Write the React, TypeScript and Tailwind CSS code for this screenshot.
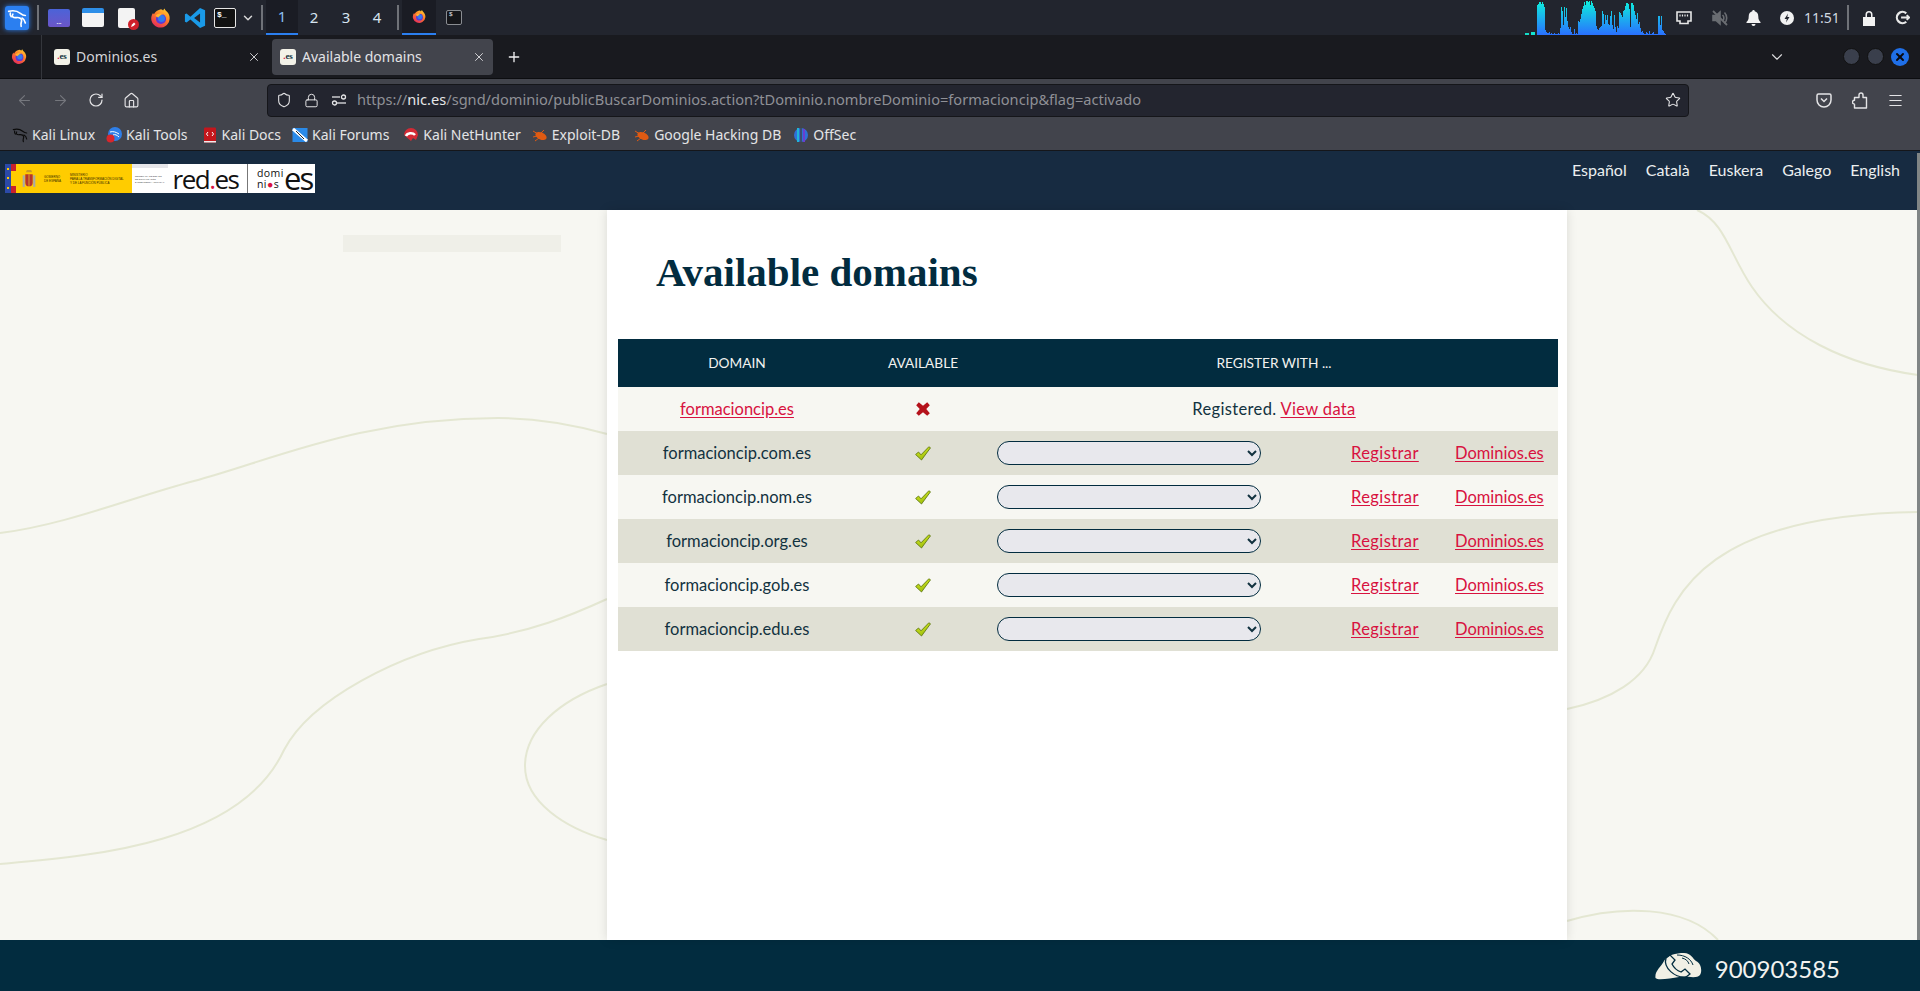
import React from "react";
import { ArrowLeft, ArrowRight, RotateCw, Home, Shield, Lock, Star, Menu, X, Plus, ChevronDown } from "lucide-react";

const ui = "font-['Noto_Sans',sans-serif]";
const web = "font-['Lato',sans-serif]";

const Firefox = ({ size = 22 }: { size?: number }) => (
  <svg width={size} height={size} viewBox="0 0 24 24" className="shrink-0">
    <defs>
      <linearGradient id="ffo" x1="0.8" y1="0" x2="0.2" y2="1">
        <stop offset="0" stopColor="#ffd02e" />
        <stop offset="0.45" stopColor="#ff7a2a" />
        <stop offset="1" stopColor="#e3255f" />
      </linearGradient>
    </defs>
    <path d="M12 2.500c1 .2 1.800.7 2.300 1.400.3-.7.800-1.500 1.700-2.200.2 1.500 1.200 2 2.800 3.800 2 2.300 3 5 2.500 8A10 10 0 1 1 3.300 6.500c.3.800.6 1.200 1 1.500C5.500 5.300 8.600 3 12 2.500Z" fill="url(#ffo)" />
    <circle cx="12" cy="13" r="5.500" fill="#5b3bd6" />
    <circle cx="12.500" cy="12.500" r="3.800" fill="#2f7bf0" />
    <path d="M6 9.500c2-2.500 6-3 8.500-1.500-2 .1-3 .8-3.500 1.800-1 .2-1.500.8-1.800 1.700C8 11.200 7 10.500 6 9.500Z" fill="#ffb52e" />
  </svg>
);

const Dragon = ({ color = "#fff", size = 20, width = 2 }: { color?: string; size?: number; width?: number }) => (
  <svg width={size} height={size} viewBox="0 0 24 24" fill="none" stroke={color} strokeWidth={width} strokeLinecap="round" strokeLinejoin="round">
    <path d="M2 4c6-1.500 11 0 14 2.500 2.500 2 4 2.500 6 2.500" />
    <path d="M7 7.500C5 10 7.500 12 11 11.500c4-.5 7 1 6.500 4-.3 2-1.500 3.500-.5 6.500" />
    <path d="M18 12c2 1 3.500 3 4 6" />
    <path d="M4 6c-.5 2 0 3.500 1 4.500" />
  </svg>
);

const Favicon = () => (
  <span className="flex h-4 w-4 shrink-0 items-center justify-center rounded-[3px] bg-[#f3f2e8] font-['Liberation_Serif',serif] text-[9px] font-bold leading-none text-[#12323f]">
    <span className="text-[#d8123f]">.</span>es
  </span>
);

const Sep = () => <span className="block h-[25px] w-[2px] shrink-0 bg-[#6f7278]" />;

const barData = [
  30, 31, 33, 33, 31, 33, 31, 28, 5, 3, 2, 2, 3, 1, 2, 1, 1, 2, 1, 1, 1, 2, 1, 7, 28, 24, 10, 28, 18, 27, 14, 8, 6, 8, 3, 1, 1, 6, 1, 2, 1, 14, 13, 16, 21, 26, 29, 33, 30, 34, 34, 33, 34, 30, 34, 32, 29, 27, 24, 9, 6, 5, 7, 8, 9, 24, 21, 11, 20, 15, 20, 11, 10, 19, 24, 10, 6, 20, 8, 3, 9, 7, 23, 22, 20, 18, 24, 25, 29, 32, 32, 31, 26, 8, 32, 32, 30, 24, 20, 16, 22, 11, 13, 7, 3, 4, 2, 1, 1, 3, 2, 1, 4, 1, 1, 2, 3, 1, 1, 1, 1, 19, 19, 10, 19, 5, 4, 2, 1,
];

const CpuGraph = () => (
  <svg width="142" height="34" viewBox="0 0 142 34" className="shrink-0">
    <defs>
      <linearGradient id="cpu" gradientUnits="userSpaceOnUse" x1="0" y1="0" x2="0" y2="34">
        <stop offset="0" stopColor="#0df0dc" />
        <stop offset="1" stopColor="#2a70ff" />
      </linearGradient>
    </defs>
    <rect x="0" y="32" width="4" height="2" fill="#14dcc8" />
    <rect x="6" y="31" width="4" height="3" fill="#12e4d0" />
    {barData.map((h, i) => (
      <rect key={i} x={12 + i} y={34 - h} width="1" height={h} fill="url(#cpu)" />
    ))}
  </svg>
);

const TopPanel = () => (
  <div className={`flex h-[35px] shrink-0 items-center bg-[#22252e] text-[#d6e4f0] ${ui}`}>
    <span className="ml-[5px] flex h-6 w-6 items-center justify-center rounded-[3px] bg-[#2b7ff0] shadow-[0_0_5px_#2b7ff0]">
      <Dragon />
    </span>
    <span className="ml-[8px]"><Sep /></span>
    <span className="ml-[9px] flex h-[18px] w-[22px] items-end justify-center rounded-[2px] bg-gradient-to-b from-[#4a63d8] to-[#6a55c8] pb-[2px] text-[6px] font-bold leading-none text-white">...</span>
    <span className="ml-[12px] h-[19px] w-[22px] rounded-[2px] bg-gradient-to-b from-[#2e8fe8] from-[25%] to-[#f4f4f4] to-[25%]" />
    <span className="relative ml-[14px] h-[20px] w-[17px] rounded-[2px] bg-[#f3f3f3]">
      <svg width="11" height="11" viewBox="0 0 11 11" className="absolute -bottom-[2px] -right-[4px]">
        <circle cx="5.500" cy="5.500" r="5.500" fill="#d0202a" />
        <path d="M3 8l1-2.500 2-2 1.500 1.500-2 2Z" fill="#fff" />
      </svg>
    </span>
    <span className="ml-[15px]"><Firefox /></span>
    <svg width="22" height="22" viewBox="0 0 24 24" className="ml-[12px] shrink-0">
      <path d="M17.500 1 23 3.500v17L17.500 23 7 13.500 2.800 17 1 16V8l1.800-1L7 10.500Zm0 6L11 12l6.500 5Z" fill="#1a9ae8" />
    </svg>
    <span className="ml-[8px] flex h-[20px] w-[22px] items-start rounded-[2px] border border-[#e6e6e6] bg-[#111] pl-[2px] font-['Liberation_Mono',monospace] text-[8px] font-bold leading-[11px] text-white">$_</span>
    <ChevronDown size={14} strokeWidth={2.500} className="ml-[5px] text-[#d8d8d8]" />
    <span className="ml-[6px]"><Sep /></span>
    <div className="ml-[3px] flex h-[35px] text-[15px]">
      <span className="flex h-[35px] w-[32px] items-center justify-center border-b-[2px] border-[#2b7ff0] bg-[#1a1c24] text-[#8cc0f0]">1</span>
      <span className="flex w-[32px] items-center justify-center">2</span>
      <span className="flex w-[32px] items-center justify-center">3</span>
      <span className="flex w-[30px] items-center justify-center">4</span>
    </div>
    <span className="ml-[5px]"><Sep /></span>
    <span className="ml-[3px] flex h-[35px] w-[34px] items-center justify-center border-b-[2px] border-[#2b7ff0] bg-[#1a1c24]"><Firefox size={15} /></span>
    <span className="ml-[10px] flex h-[15px] w-[16px] items-start rounded-[2px] border border-[#8a8d92] bg-[#15161a] pl-[2px] font-['Liberation_Mono',monospace] text-[6px] leading-[7px] text-white">$</span>
    <div className="flex-1" />
    <span className="mr-[9px]"><CpuGraph /></span>
    <svg width="16" height="14" viewBox="0 0 16 14" className="mr-[19px] shrink-0" fill="none" stroke="#e8e8e8" strokeWidth="1.600">
      <path d="M1 1h14v9h-3v2.500H4V10H1Z" />
      <path d="M4 3.500v2M6.500 3.500v2M9 3.500v2M11.500 3.500v2" strokeWidth="1.200" />
    </svg>
    <svg width="18" height="18" viewBox="0 0 18 18" className="mr-[17px] shrink-0" fill="none" stroke="#6a6d72" strokeWidth="1.600">
      <path d="M2 6.500h3L9 3v12l-4-3.500H2Z" fill="#6a6d72" />
      <path d="M11.500 6a4 4 0 0 1 0 6M13.500 3.500a8 8 0 0 1 0 11" />
      <path d="M2 2l14 14" strokeWidth="1.800" />
    </svg>
    <svg width="15" height="16" viewBox="0 0 15 16" className="mr-[19px] shrink-0" fill="#f2f2f2">
      <path d="M7.500 0a1.200 1.200 0 0 1 1.200 1.300C11 1.900 12.300 3.800 12.300 6.500c0 3 .8 4 2.200 5.500v1H.5v-1C2 10.500 2.700 9.500 2.700 6.500c0-2.700 1.300-4.600 3.600-5.200A1.200 1.200 0 0 1 7.500 0ZM5.500 14h4a2 2 0 0 1-4 0Z" />
    </svg>
    <svg width="14" height="14" viewBox="0 0 14 14" className="mr-[10px] shrink-0">
      <circle cx="7" cy="7" r="7" fill="#f2f2f2" />
      <path d="M8 2.500 4.500 8h2.300L6 11.500 9.500 6H7.300Z" fill="#22252e" />
    </svg>
    <span className="w-[30px] text-[14px] leading-none text-[#cfd8e0]">11:51</span>
    <span className="ml-[13px]"><Sep /></span>
    <svg width="14" height="16" viewBox="0 0 14 16" className="ml-[13px] shrink-0" fill="#f2f2f2">
      <path d="M1 7h12v9H1ZM3.500 7V4.500a3.500 3.500 0 0 1 7 0V7H9V4.500a2 2 0 0 0-4 0V7Z" />
    </svg>
    <svg width="15" height="15" viewBox="0 0 16 16" className="ml-[19px] mr-[10px] shrink-0" fill="none" stroke="#e8e8e8" strokeWidth="2.400">
      <path d="M12 3.500a6 6 0 1 0 0 9" />
      <path d="M6.500 8H15M12.500 5.500 15 8l-2.500 2.500" strokeWidth="2" />
    </svg>
  </div>
);

const TabClose = () => <X size={14} strokeWidth={1.500} className="shrink-0 text-[#e4e4e6]" />;

const TabBar = () => (
  <div className={`flex h-[44px] shrink-0 items-center border-b border-[#0c0d10] bg-[#191a1f] text-[14px] text-[#d4d5d8] ${ui}`}>
    <span className="ml-[11px]"><Firefox size={17} /></span>
    <span className="ml-[13px] h-[44px] w-px bg-[#34363c]" />
    <div className="ml-[5px] flex h-[36px] w-[225px] items-center rounded-[4px] pl-[7px] pr-[11px]">
      <Favicon />
      <span className="ml-[6px] flex-1">Dominios.es</span>
      <TabClose />
    </div>
    <div className="flex h-[36px] w-[221px] items-center rounded-[4px] bg-[#42444c] pl-[8px] pr-[7px] text-[#e2e3e6]">
      <Favicon />
      <span className="ml-[6px] flex-1">Available domains</span>
      <TabClose />
    </div>
    <Plus size={16} className="ml-[13px] text-[#f0f0f2]" />
    <div className="flex-1" />
    <ChevronDown size={18} strokeWidth={1.500} className="text-[#dcdcde]" />
    <span className="ml-[57px] h-[17px] w-[17px] rounded-full border border-[#111] bg-[#3a3f4c]" />
    <span className="ml-[7px] h-[17px] w-[17px] rounded-full border border-[#111] bg-[#3a3f4c]" />
    <span className="ml-[7px] mr-[11px] flex h-[18px] w-[18px] items-center justify-center rounded-full bg-[#1f6fe8]">
      <X size={12} strokeWidth={4} className="text-[#0a0a10]" />
    </span>
  </div>
);

const Toolbar = () => (
  <div className={`flex h-[41px] shrink-0 items-center bg-[#42444c] pt-[1px] text-[#e4e4e6] ${ui}`}>
    <ArrowLeft size={17} strokeWidth={1.500} className="ml-[16px] text-[#75777d]" />
    <ArrowRight size={17} strokeWidth={1.500} className="ml-[19px] text-[#75777d]" />
    <RotateCw size={16} strokeWidth={1.800} className="ml-[19px]" />
    <Home size={17} strokeWidth={1.600} className="ml-[19px]" />
    <div className="ml-[127px] flex h-[33px] w-[1422px] items-center rounded-[4px] border border-[#15161a] bg-[#23252f] pl-[8px] pr-[7px] text-[14.600px]">
      <Shield size={16} strokeWidth={1.600} className="text-[#e4e4e6]" />
      <Lock size={15} strokeWidth={1.600} className="ml-[12px] text-[#e4e4e6]" />
      <svg width="16" height="12" viewBox="0 0 16 12" className="ml-[12px] shrink-0" fill="none" stroke="#e4e4e6" strokeWidth="1.300">
        <path d="M1 3h8" />
        <circle cx="12.500" cy="3" r="2" />
        <circle cx="3.500" cy="9" r="2" />
        <path d="M6 9h9" />
      </svg>
      <span className="ml-[10px] flex-1 truncate text-[#8f9096]">
        https://<span className="text-[#e6e6e8]">nic.es</span>/sgnd/dominio/publicBuscarDominios.action?tDominio.nombreDominio=formacioncip&amp;flag=activado
      </span>
      <Star size={16} strokeWidth={1.600} />
    </div>
    <svg width="16" height="15" viewBox="0 0 16 15" className="ml-[127px] shrink-0" fill="none" stroke="#e4e4e6" strokeWidth="1.500">
      <path d="M2.500 1h11A1.500 1.500 0 0 1 15 2.500V7a7 7 0 0 1-14 0V2.500A1.500 1.500 0 0 1 2.500 1Z" />
      <path d="m5 5.500 3 3 3-3" />
    </svg>
    <svg width="16" height="17" viewBox="0 0 16 17" className="ml-[20px] shrink-0" fill="none" stroke="#e4e4e6" strokeWidth="1.400" strokeLinejoin="round">
      <path d="M2.500 16v-3.800a2 2 0 0 1 0-4V5.500H7V3a2 2 0 0 1 4 0v2.500h3.500V16Z" />
    </svg>
    <Menu size={17} strokeWidth={1.600} className="ml-[19px]" />
  </div>
);

const Bug = () => (
  <svg width="16" height="16" viewBox="0 0 16 16">
    <ellipse cx="9" cy="9" rx="6" ry="3.500" transform="rotate(25 9 9)" fill="#e05a12" />
    <path d="M1 4l5 3M1 10l4-1M3 14l4-3M12 3 9 6" stroke="#e05a12" />
  </svg>
);

const bookmarks: [string, number, React.ReactNode][] = [
  ["Kali Linux", 12, <Dragon color="#0b0b0b" size={16} width={1.800} />],
  ["Kali Tools", 11, (
    <svg width="16" height="16" viewBox="0 0 16 16"><circle cx="9" cy="7" r="7" fill="#2f7fe8" /><path d="M4 5c3-1 6 0 9 2M7 8c2-1 4 0 6 2" stroke="#fff" fill="none" /><circle cx="4.500" cy="11.500" r="4" fill="#d8262c" /></svg>
  )],
  ["Kali Docs", 14, (
    <svg width="16" height="16" viewBox="0 0 16 16"><rect x="2" y="0.500" width="12" height="15" rx="1" fill="#c4161c" /><path d="M6 5 4.500 7 6 9M10 5l1.500 2L10 9" stroke="#fff" fill="none" /><rect x="2" y="14" width="12" height="1.500" fill="#eee" /></svg>
  )],
  ["Kali Forums", 11, (
    <svg width="16" height="16" viewBox="0 0 16 16"><rect x="0.500" y="1" width="15" height="14" fill="#2a8ae8" /><path d="M1 2 15 14" stroke="#fff" strokeWidth="3" /><path d="M4 4l8 8" stroke="#222" /></svg>
  )],
  ["Kali NetHunter", 14, (
    <svg width="16" height="16" viewBox="0 0 16 16"><path d="M1 8a7 7 0 0 1 14 0l-2 5-3-2-2 3Z" fill="#d32a35" /><path d="M3 9a5 4 0 0 1 9-1" stroke="#fff" strokeWidth="2.500" fill="none" /></svg>
  )],
  ["Exploit-DB", 11, <Bug />],
  ["Google Hacking DB", 14, <Bug />],
  ["OffSec", 12, (
    <svg width="16" height="16" viewBox="0 0 16 16"><circle cx="8" cy="8" r="7" fill="#2f6fd8" /><path d="M8 0v16" stroke="#42444c" strokeWidth="1.500" /><path d="M5 1v14" stroke="#1fb5d8" strokeWidth="2" /><path d="M11 2v13" stroke="#6a3fd0" strokeWidth="2" /></svg>
  )],
];

const Bookmarks = () => (
  <div className={`flex h-[31px] shrink-0 items-center border-b border-[#15161a] bg-[#42444c] pb-[1px] pl-[12px] text-[14px] text-[#e4e4e6] ${ui}`}>
    {bookmarks.map(([label, gap, icon], i) => (
      <span key={label} className="flex items-center gap-[4px]" style={{ marginLeft: i === 0 ? 0 : gap }}>
        <span className="h-4 w-4 shrink-0">{icon}</span>
        {label}
      </span>
    ))}
  </div>
);

const Logo = () => (
  <div className="ml-[5px] flex h-[29px] w-[310px] shrink-0 items-stretch bg-white">
    <div className="flex w-[6px] flex-col items-center justify-around bg-[#2c4aa8]">
      <span className="h-[2px] w-[2px] bg-[#ffcc00]" />
      <span className="h-[2px] w-[2px] bg-[#ffcc00]" />
      <span className="h-[2px] w-[2px] bg-[#ffcc00]" />
    </div>
    <div className="flex w-[5px] flex-col">
      <span className="h-[7px] bg-[#c8202c]" />
      <span className="flex-1 bg-[#ffcc00]" />
      <span className="h-[7px] bg-[#c8202c]" />
    </div>
    <div className="flex w-[116px] items-center bg-[#ffcc00] pl-[5px] font-['Liberation_Sans',sans-serif] text-[3px] leading-[4px] text-[#3a2a00]">
      <svg width="16" height="20" viewBox="0 0 14 19" className="shrink-0">
        <rect x="1" y="6" width="2" height="11" fill="#a8a8a8" />
        <rect x="11" y="6" width="2" height="11" fill="#a8a8a8" />
        <path d="M3.500 5h7v8a3.500 3.500 0 0 1-7 0Z" fill="#b8342a" />
        <path d="M4 3h6L9 1H5Z" fill="#c8992a" />
        <path d="M7 5v11" stroke="#d8a030" />
      </svg>
      <span className="ml-[7px] w-[18px] whitespace-nowrap">GOBIERNO<br />DE ESPAÑA</span>
      <span className="ml-[8px] whitespace-nowrap">MINISTERIO<br />PARA LA TRANSFORMACIÓN DIGITAL<br />Y DE LA FUNCIÓN PÚBLICA</span>
    </div>
    <div className="flex w-[36px] flex-col bg-white">
      <span className="h-[4px] bg-[#e6e6ea]" />
      <span className="mt-[7px] whitespace-nowrap pl-[3px] font-['Liberation_Sans',sans-serif] text-[2.200px] leading-[3px] text-[#444]">SECRETARÍA DE ESTADO<br />DE DIGITALIZACIÓN<br />E INTELIGENCIA ARTIFICIAL</span>
    </div>
    <div className="flex w-[80px] items-center justify-center border-r-[1px] border-[#777] pr-[4px] font-['Open_Sans',sans-serif] text-[26px] font-medium leading-none tracking-[-1.500px] text-[#111]">
      red<span className="text-[#d8123f]">.</span>es
    </div>
    <div className="flex flex-1 items-center pl-[9px] font-['Open_Sans',sans-serif] text-[#111]">
      <span className="w-[27px] text-[10.500px] leading-[11px] tracking-[0.400px]">domi<br />ni<span className="text-[#d8123f]">●</span>s</span>
      <span className="text-[31px] leading-none tracking-[-2px]">es</span>
    </div>
  </div>
);

const SiteHeader = () => (
  <div className={`flex h-[59px] shrink-0 items-start bg-[#172b41] pt-[13px] text-[16px] text-[#eceff0] ${web}`}>
    <Logo />
    <nav className="ml-auto mr-[20px] flex gap-[19px] leading-[12px]">
      <span>Español</span>
      <span>Català</span>
      <span>Euskera</span>
      <span>Galego</span>
      <span>English</span>
    </nav>
  </div>
);

const Cross = () => (
  <svg width="14" height="14" viewBox="0 0 15 15" className="mx-auto">
    <path d="M3 .3 7.500 4 12 .3 14.800 3.500 11 7.500 14.800 12 12 14.800 7.500 11 3 14.800.2 12 4 7.500.2 3.500Z" fill="#b5121b" />
  </svg>
);

const Tick = () => (
  <svg width="16" height="15" viewBox="0 0 16 15" className="mx-auto">
    <defs>
      <linearGradient id="tick" x1="0" y1="0" x2="0.400" y2="1">
        <stop offset="0" stopColor="#d8ea20" />
        <stop offset="1" stopColor="#a0c010" />
      </linearGradient>
    </defs>
    <path d="M.6 8.500 3.500 6 6 8.800 13.800.8 15.500 1.800 6.500 14Z" fill="url(#tick)" stroke="#55700a" strokeWidth="0.800" />
  </svg>
);

const A = ({ children, className = "" }: { children: React.ReactNode; className?: string }) => (
  <a className={`text-[#d8123f] underline underline-offset-[2px] ${className}`}>{children}</a>
);

const domains = ["formacioncip.com.es", "formacioncip.nom.es", "formacioncip.org.es", "formacioncip.gob.es", "formacioncip.edu.es"];

const DomainTable = () => (
  <table className={`ml-[11px] w-[940px] table-fixed border-collapse text-[16.500px] text-[#12323f] ${web}`}>
    <colgroup>
      <col className="w-[238px]" />
      <col className="w-[134px]" />
      <col className="w-[346px]" />
      <col className="w-[97px]" />
      <col className="w-[125px]" />
    </colgroup>
    <thead>
      <tr className="h-[48px] bg-[#022c3f] text-[13.700px] text-[#f2f3f0]">
        <th className="font-normal">DOMAIN</th>
        <th className="font-normal">AVAILABLE</th>
        <th colSpan={3} className="font-normal">REGISTER WITH ...</th>
      </tr>
    </thead>
    <tbody>
      <tr className="h-[44px] bg-[#f7f7f2]">
        <td className="text-center"><A>formacioncip.es</A></td>
        <td><Cross /></td>
        <td colSpan={3} className="text-center tracking-[0.350px]">Registered. <A>View data</A></td>
      </tr>
      {domains.map((d, i) => (
        <tr key={d} className={`h-[44px] ${i % 2 === 0 ? "bg-[#e0e0d4]" : "bg-[#f7f7f2]"}`}>
          <td className="text-center">{d}</td>
          <td><Tick /></td>
          <td className="pl-[7px]">
            <select className="block h-[24px] w-[264px] rounded-[12px] border border-[#022c3f] bg-[#e8e8ed] outline-none">
              <option></option>
            </select>
          </td>
          <td className="pl-[15px]"><A className="tracking-[0.400px]">Registrar</A></td>
          <td className="pl-[22px]"><A>Dominios.es</A></td>
        </tr>
      ))}
    </tbody>
  </table>
);

const Curves = () => (
  <svg className="absolute inset-0 h-[730px] w-[1920px]" viewBox="0 210 1920 730" fill="none" stroke="#e4e7d2" strokeWidth="2">
    <path d="M0 533C65 525 130 498 194 481C270 461 360 418 498 418C535 418 575 425 607 434" />
    <path d="M0 864C90 856 240 845 284 750C310 700 400 652 479 639C530 632 570 616 607 599" />
    <path d="M607 684C560 700 525 730 525 766S565 828 607 840" />
    <path d="M1697 210C1725 222 1730 255 1752 287C1785 335 1845 365 1918 375" />
    <path d="M1567 709C1610 700 1645 680 1655 648C1675 590 1710 515 1918 512" />
    <path d="M1567 921C1620 905 1685 905 1718 940" />
  </svg>
);

const Page = () => (
  <div className="relative flex min-h-0 flex-1 bg-[#f7f7f2]">
    <Curves />
    <aside className="relative w-[607px] shrink-0 pl-[343px] pt-[25px]">
      <div className="h-[17px] w-[218px] bg-[#efefe8]" />
    </aside>
    <main className="relative w-[960px] shrink-0 bg-white shadow-[0_0_10px_rgba(0,0,0,0.12)]">
      <h1 className="ml-[49px] mt-[40px] font-['Liberation_Serif',serif] text-[41px] font-bold leading-[44px] text-[#022c3f]">Available domains</h1>
      <div className="mt-[45px]"><DomainTable /></div>
    </main>
    <div className="absolute -top-[57px] bottom-0 right-0 w-[3px] bg-[#808585]" />
  </div>
);

const Footer = () => (
  <div className={`flex h-[51px] shrink-0 items-center justify-end bg-[#022c3f] pr-[80px] pt-[7px] text-[24px] text-[#f2f3f0] ${web}`}>
    <svg width="47" height="27" viewBox="0 0 47 27" className="-mt-[6px]">
      <path d="M.5 25C-.5 18 6 14 9 8 12 2 21 0 29 0c7 0 9 6 12 8 6 3 6 11 4 14-3 4-12 1-21 2-8 1-21 4-23.500 1Z" fill="#f1f0e5" />
      <path d="M11 5 15 2 20 7 17 11C19 15 23 18 26 19L30 16 35 21 31 24C20 25 8 15 11 5Z" stroke="#022c3f" strokeWidth="1.300" fill="none" />
      <path d="M22 2C30 2 36 6 38 12M27 5C31 6 33 8 34 11" stroke="#022c3f" strokeWidth="1" fill="none" />
    </svg>
    <span className="ml-[13px]">900903585</span>
  </div>
);

export default function App() {
  return (
    <div className="flex h-[991px] w-[1920px] flex-col overflow-hidden">
      <TopPanel />
      <TabBar />
      <Toolbar />
      <Bookmarks />
      <SiteHeader />
      <Page />
      <Footer />
    </div>
  );
}
